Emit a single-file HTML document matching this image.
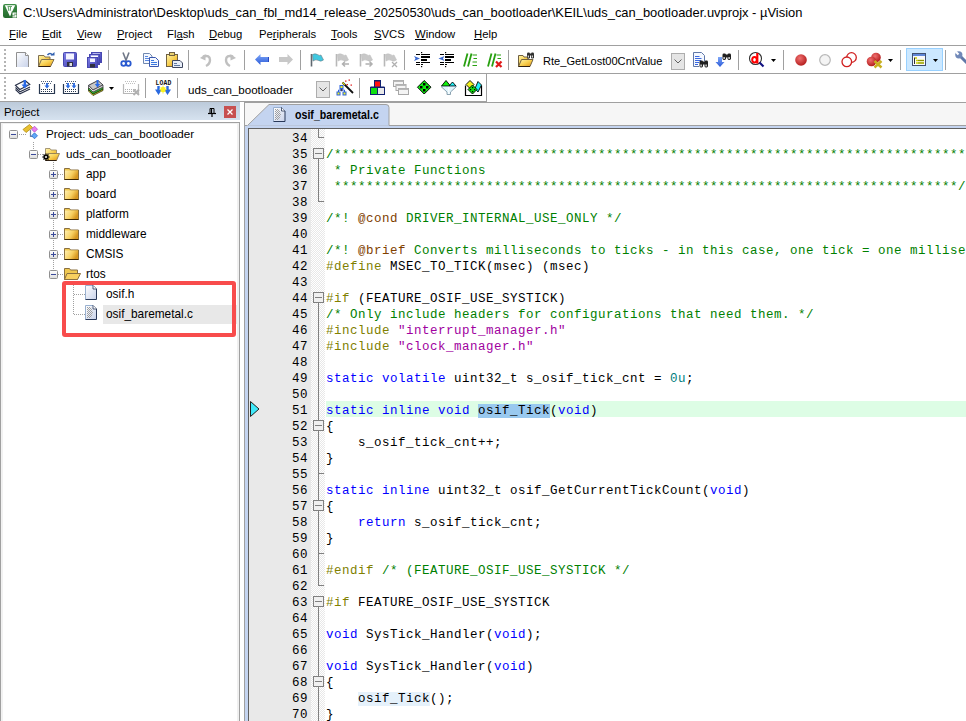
<!DOCTYPE html><html><head><meta charset="utf-8"><title>uVision</title><style>
*{margin:0;padding:0;box-sizing:border-box}
html,body{width:966px;height:721px;overflow:hidden;background:#fff;font-family:"Liberation Sans",sans-serif;color:#000}
.a{position:absolute}
svg{position:absolute;overflow:visible}
.t{position:absolute;white-space:pre;line-height:1}
.sep{position:absolute;width:1px;background:#a0a0a0}
.code{position:absolute;left:326px;white-space:pre;font-family:"Liberation Mono",monospace;font-size:12.5px;letter-spacing:0.5px;line-height:16px;height:16px;padding-top:2px}
.ln{position:absolute;left:249px;width:59px;text-align:right;white-space:pre;font-family:"Liberation Mono",monospace;font-size:12.5px;letter-spacing:0.5px;line-height:16px;height:16px;padding-top:2px;color:#000}
.k{color:#0000ff}.c{color:#008000}.p{color:#808000}.s{color:#a000a0}.n{color:#008080}.d{color:#804000}
.mi{position:absolute;top:25.5px;font-size:11.3px;line-height:16px;white-space:pre}
.mi u{text-decoration:underline;text-underline-offset:1px}
</style></head><body>
<div class="a" style="left:0;top:0;width:966px;height:24px;background:#fff"></div>
<svg style="left:3px;top:4px" width="14" height="14" viewBox="0 0 14 14">
<defs><linearGradient id="kg" x1="0" y1="0" x2="0" y2="1"><stop offset="0" stop-color="#3f8f48"/><stop offset="1" stop-color="#246a2c"/></linearGradient></defs>
<rect x="0" y="0" width="14" height="14" rx="2.2" fill="url(#kg)"/>
<path d="M1.8 1.3 L12.2 1.3 L7 12.5 Z" fill="#fff"/>
<path d="M5.2 2.5 L5.8 6.8 M7.5 2.5 L7.3 6.8 M4.5 2.5H9" stroke="#6aa870" stroke-width="1.1" fill="none"/>
<rect x="8.6" y="7.6" width="5.4" height="6.4" fill="#2a722f"/>
<path d="M9.5 8.5H13.5V9.8H10.8V10.4H13.5V13.6H9.5V12.3H12.2V11.6H9.5Z" fill="#fff"/>
</svg>
<div class="t" style="left:23px;top:6.5px;font-size:12.93px;color:#000">C:\Users\Administrator\Desktop\uds_can_fbl_md14_release_20250530\uds_can_bootloader\KEIL\uds_can_bootloader.uvprojx - µVision</div>
<div class="mi" style="left:9px"><u>F</u>ile</div>
<div class="mi" style="left:42px"><u>E</u>dit</div>
<div class="mi" style="left:77px"><u>V</u>iew</div>
<div class="mi" style="left:117px"><u>P</u>roject</div>
<div class="mi" style="left:167px">Fl<u>a</u>sh</div>
<div class="mi" style="left:209px"><u>D</u>ebug</div>
<div class="mi" style="left:259px">Pe<u>r</u>ipherals</div>
<div class="mi" style="left:331px"><u>T</u>ools</div>
<div class="mi" style="left:374px"><u>S</u>VCS</div>
<div class="mi" style="left:415px"><u>W</u>indow</div>
<div class="mi" style="left:474px"><u>H</u>elp</div>
<div class="a" style="left:0;top:45px;width:966px;height:1px;background:#a0a0a0"></div>
<div class="a" style="left:0;top:46px;width:966px;height:27px;background:#fff"></div>
<div class="a" style="left:0;top:73px;width:966px;height:1px;background:#a0a0a0"></div>
<div class="a" style="left:0;top:74px;width:966px;height:27px;background:#fff"></div>
<div class="a" style="left:486px;top:74px;width:1px;height:27px;background:#a0a0a0"></div>
<div class="a" style="left:0;top:101px;width:487px;height:1px;background:#a0a0a0"></div>
<div class="a" style="left:244px;top:102px;width:722px;height:1px;background:#a0a0a0"></div>
<div class="a" style="left:4px;top:49px;width:2px;height:2px;background:#b4b4b4"></div>
<div class="a" style="left:4px;top:53px;width:2px;height:2px;background:#b4b4b4"></div>
<div class="a" style="left:4px;top:57px;width:2px;height:2px;background:#b4b4b4"></div>
<div class="a" style="left:4px;top:61px;width:2px;height:2px;background:#b4b4b4"></div>
<div class="a" style="left:4px;top:65px;width:2px;height:2px;background:#b4b4b4"></div>
<div class="a" style="left:4px;top:69px;width:2px;height:2px;background:#b4b4b4"></div>
<div class="a" style="left:4px;top:77px;width:2px;height:2px;background:#b4b4b4"></div>
<div class="a" style="left:4px;top:81px;width:2px;height:2px;background:#b4b4b4"></div>
<div class="a" style="left:4px;top:85px;width:2px;height:2px;background:#b4b4b4"></div>
<div class="a" style="left:4px;top:89px;width:2px;height:2px;background:#b4b4b4"></div>
<div class="a" style="left:4px;top:93px;width:2px;height:2px;background:#b4b4b4"></div>
<div class="a" style="left:4px;top:97px;width:2px;height:2px;background:#b4b4b4"></div>
<div class="sep" style="left:108px;top:50px;height:20px"></div>
<div class="sep" style="left:188px;top:50px;height:20px"></div>
<div class="sep" style="left:244px;top:50px;height:20px"></div>
<div class="sep" style="left:300px;top:50px;height:20px"></div>
<div class="sep" style="left:404px;top:50px;height:20px"></div>
<div class="sep" style="left:508px;top:50px;height:20px"></div>
<div class="sep" style="left:738px;top:50px;height:20px"></div>
<div class="sep" style="left:783px;top:50px;height:20px"></div>
<div class="sep" style="left:900px;top:50px;height:20px"></div>
<div class="sep" style="left:945px;top:50px;height:20px"></div>
<div class="sep" style="left:145px;top:78px;height:20px"></div>
<div class="sep" style="left:177px;top:78px;height:20px"></div>
<div class="sep" style="left:359px;top:78px;height:20px"></div>
<svg style="left:0;top:0" width="0" height="0"><defs><linearGradient id="gd" x1="0" y1="0" x2="1" y2="1"><stop offset="0" stop-color="#ffffff"/><stop offset="1" stop-color="#c8d2ea"/></linearGradient><linearGradient id="gy" x1="0" y1="0" x2="1" y2="1"><stop offset="0" stop-color="#fff4b0"/><stop offset="0.5" stop-color="#f8d050"/><stop offset="1" stop-color="#e09010"/></linearGradient><linearGradient id="gp" x1="0" y1="0" x2="1" y2="1"><stop offset="0" stop-color="#8080e8"/><stop offset="1" stop-color="#4040b0"/></linearGradient><radialGradient id="rg" cx="0.4" cy="0.35" r="0.7"><stop offset="0" stop-color="#f07070"/><stop offset="1" stop-color="#b01818"/></radialGradient><linearGradient id="gb" x1="0" y1="0" x2="0" y2="1"><stop offset="0" stop-color="#80a8f8"/><stop offset="1" stop-color="#2a5ad8"/></linearGradient><linearGradient id="gx" x1="0" y1="0" x2="0" y2="1"><stop offset="0" stop-color="#ffffff"/><stop offset="1" stop-color="#dcdcdc"/></linearGradient><pattern id="chk" width="2" height="2" patternUnits="userSpaceOnUse"><rect width="1" height="1" fill="#a0a0a0"/><rect x="1" y="1" width="1" height="1" fill="#a0a0a0"/></pattern></defs></svg>
<svg style="left:16px;top:52px" width="13" height="15" viewBox="0 0 13 15"><path d="M0.5 15V0.5H9.5L12.5 3.5V15" fill="url(#gd)" stroke="#909090"/><path d="M9.5 0.5V3.5H12.5" fill="#fff" stroke="#909090"/></svg>
<svg style="left:38px;top:52px" width="17" height="15" viewBox="0 0 17 15"><path d="M0.5 14.5V3.5H6L7 5H12V7" fill="url(#gy)" stroke="#807050"/><path d="M3.5 7.5H16L12.5 14.5H0.5Z" fill="url(#gy)" stroke="#807050"/><path d="M0.5 14.5H12.5" stroke="#302010"/><path d="M9.5 3 Q12 0 14.5 3" stroke="#3060b0" stroke-width="1.6" fill="none"/><path d="M12.5 3.5H16.5V0Z" fill="#3060b0"/></svg>
<svg style="left:63px;top:52px" width="14" height="15" viewBox="0 0 14 15"><rect x="0.5" y="0.5" width="13" height="14" rx="1" fill="url(#gp)" stroke="#4848b0"/><rect x="3" y="1.5" width="8" height="6" fill="#f4f4ff"/><rect x="4" y="10" width="6" height="4.5" fill="#303040"/><rect x="6.5" y="11" width="2.5" height="3" fill="#e0e0e0"/></svg>
<svg style="left:87px;top:52px" width="15" height="16" viewBox="0 0 15 16"><rect x="4.5" y="0.5" width="10" height="10" fill="url(#gp)" stroke="#4848b0"/><rect x="6" y="1.5" width="7" height="1.5" fill="#fff"/><rect x="2.5" y="2.5" width="10" height="10" fill="url(#gp)" stroke="#4848b0"/><rect x="4" y="3.5" width="7" height="1.5" fill="#fff"/><rect x="0.5" y="5.5" width="10" height="10" fill="url(#gp)" stroke="#4848b0"/><rect x="3" y="6.5" width="5" height="3.5" fill="#f4f4ff"/><rect x="3" y="12" width="5" height="3.5" fill="#303040"/></svg>
<svg style="left:121px;top:52px" width="10" height="15" viewBox="0 0 10 15"><path d="M2 0.5L5.3 9M8 0.5L4.7 9" stroke="#707888" stroke-width="1.6"/><circle cx="2.6" cy="11.5" r="2.3" fill="none" stroke="#2a5ad0" stroke-width="1.8"/><circle cx="7.4" cy="11.5" r="2.3" fill="none" stroke="#2a5ad0" stroke-width="1.8"/></svg>
<svg style="left:143px;top:53px" width="16" height="14" viewBox="0 0 16 14"><path d="M0.5 0.5H6.5L9 3V10.5H0.5Z" fill="#f4f8ff" stroke="#7088b0"/><path d="M2 3.5H5M2 5.5H7M2 7.5H7" stroke="#5a88e0"/><path d="M6.5 4.5H12.5L15.5 7.5V13.5H6.5Z" fill="#f4f8ff" stroke="#3a58b0"/><path d="M8 7.5H11M8 9.5H14M8 11.5H14" stroke="#3a78e0"/></svg>
<svg style="left:166px;top:52px" width="17" height="16" viewBox="0 0 17 16"><rect x="0.5" y="2.5" width="11" height="12" fill="url(#gy)" stroke="#706040"/><rect x="3.5" y="0.5" width="5" height="3" fill="#e8d070" stroke="#706040"/><path d="M6.5 8.5H14L16.5 11V15.5H6.5Z" fill="#e8eef8" stroke="#404860"/><path d="M8 11.5H11M8 13.5H14" stroke="#6078a0"/></svg>
<svg style="left:200px;top:53px" width="12" height="14" viewBox="0 0 12 14"><path d="M3 3.5 Q10 1.5 10 7 Q10 11 6 13" stroke="#c0c0c0" stroke-width="2.4" fill="none"/><path d="M0 5L5.5 1V7.5Z" fill="#c0c0c0"/></svg>
<svg style="left:224px;top:53px" width="12" height="14" viewBox="0 0 12 14"><path d="M9 3.5 Q2 1.5 2 7 Q2 11 6 13" stroke="#c0c0c0" stroke-width="2.4" fill="none"/><path d="M12 5L6.5 1V7.5Z" fill="#c0c0c0"/></svg>
<svg style="left:255px;top:54px" width="14" height="11" viewBox="0 0 14 11"><path d="M0 5.5L5.5 0V3H14V8H5.5V11Z" fill="url(#gb)"/><path d="M13 3H14V8H13Z" fill="#2a4ac0"/></svg>
<svg style="left:279px;top:54px" width="14" height="11" viewBox="0 0 14 11"><path d="M14 5.5L8.5 0V3H0V8H8.5V11Z" fill="#c8c8c8"/></svg>
<svg style="left:310px;top:53px" width="15" height="14" viewBox="0 0 15 14"><path d="M1.5 1V13.5" stroke="#606870" stroke-width="1.6"/><path d="M2.5 1.5 Q5 0 7.5 1.5 Q9.5 3 11 2 L13.5 7 Q11 9 8.5 7.5 Q6 6 3 8Z" fill="#40c8e0" stroke="#606870" stroke-width="0.5"/></svg>
<svg style="left:335px;top:53px" width="15" height="14" viewBox="0 0 15 14"><path d="M1.5 1V13.5" stroke="#b8b8b8" stroke-width="1.6"/><path d="M2.5 1.5 Q5 0 7.5 1.5 Q9.5 3 11 2 L13.5 7 Q11 9 8.5 7.5 Q6 6 3 8Z" fill="#c8c8c8" stroke="#b8b8b8" stroke-width="0.5"/><path d="M14 11H7.5M10 8.5L7.5 11L10 13.5" stroke="#b0b0b0" stroke-width="1.5" fill="none"/></svg>
<svg style="left:359px;top:53px" width="15" height="14" viewBox="0 0 15 14"><path d="M1.5 1V13.5" stroke="#b8b8b8" stroke-width="1.6"/><path d="M2.5 1.5 Q5 0 7.5 1.5 Q9.5 3 11 2 L13.5 7 Q11 9 8.5 7.5 Q6 6 3 8Z" fill="#c8c8c8" stroke="#b8b8b8" stroke-width="0.5"/><path d="M6.5 11H13M10.5 8.5L13 11L10.5 13.5" stroke="#b0b0b0" stroke-width="1.5" fill="none"/></svg>
<svg style="left:383px;top:53px" width="15" height="14" viewBox="0 0 15 14"><path d="M1.5 1V13.5" stroke="#b8b8b8" stroke-width="1.6"/><path d="M2.5 1.5 Q5 0 7.5 1.5 Q9.5 3 11 2 L13.5 7 Q11 9 8.5 7.5 Q6 6 3 8Z" fill="#c8c8c8" stroke="#b8b8b8" stroke-width="0.5"/><path d="M9 9L14 14M14 9L9 14" stroke="#b0b0b0" stroke-width="1.3"/></svg>
<svg style="left:414px;top:52px" width="17" height="16" viewBox="0 0 17 16"><rect x="7" y="0" width="1.2" height="1.2" fill="#000"/><rect x="7" y="14" width="1.2" height="1.2" fill="#000"/><path d="M7 2.5H16M7 10.5H16" stroke="#000" stroke-width="1"/><path d="M7 5H16M7 8H13" stroke="#000" stroke-width="1.8"/><path d="M7 12.5H9" stroke="#000" stroke-width="1"/><path d="M2 2.5H6M2 10.5H6M2 12.5H6" stroke="#000" stroke-width="1"/><path d="M0 4L6 6.5L0 9L1.5 6.5Z" fill="#3a68d0"/></svg>
<svg style="left:438px;top:52px" width="17" height="16" viewBox="0 0 17 16"><rect x="7" y="0" width="1.2" height="1.2" fill="#000"/><rect x="7" y="14" width="1.2" height="1.2" fill="#000"/><path d="M7 2.5H16M7 10.5H16" stroke="#000" stroke-width="1"/><path d="M7 5H16M7 8H13" stroke="#000" stroke-width="1.8"/><path d="M7 12.5H9" stroke="#000" stroke-width="1"/><path d="M2 2.5H6M2 10.5H6M2 12.5H6" stroke="#000" stroke-width="1"/><path d="M6.5 4L0.5 6.5L6.5 9L5 6.5Z" fill="#3a68d0"/></svg>
<svg style="left:463px;top:53px" width="15" height="14" viewBox="0 0 15 14"><path d="M4.5 0.5L1 13.5M8.5 0.5L5 13.5" stroke="#28a010" stroke-width="1.8"/><path d="M9.5 2H14M10.5 5.5H14M9.5 9H14M9.5 12.5H14" stroke="#28a010" stroke-width="1.1"/></svg>
<svg style="left:487px;top:53px" width="16" height="15" viewBox="0 0 16 15"><path d="M4.5 0.5L1 13.5M8.5 0.5L5 13.5" stroke="#28a010" stroke-width="1.8"/><path d="M9.5 2H14M10.5 5.5H14" stroke="#28a010" stroke-width="1.1"/><path d="M9 8.5L14.5 14M14.5 8.5L9 14" stroke="#e01818" stroke-width="2.2"/></svg>
<svg style="left:518px;top:52px" width="17" height="15" viewBox="0 0 17 15"><path d="M0.5 14.5V3.5H5L6 5H10V8" fill="url(#gy)" stroke="#706040"/><path d="M3.5 7.5H15L12 14.5H0.5Z" fill="url(#gy)" stroke="#706040"/><path d="M0.5 14.5H12" stroke="#302010"/><rect x="9" y="0.5" width="3" height="6" rx="1.2" fill="#303030"/><rect x="13" y="0.5" width="3" height="6" rx="1.2" fill="#303030"/><rect x="11.5" y="1.5" width="2" height="2" fill="#303030"/><rect x="9.8" y="3.5" width="1" height="2" fill="#fff"/><rect x="13.8" y="3.5" width="1" height="2" fill="#fff"/></svg>
<div class="t" style="left:543px;top:56px;font-size:11.1px">Rte_GetLost00CntValue</div>
<div class="a" style="left:671px;top:53px;width:14px;height:17px;background:#e5e5e5;border:1px solid #adadad"></div>
<svg style="left:674px;top:59px" width="8" height="5" viewBox="0 0 8 5"><path d="M0.5 0.5L4 4L7.5 0.5" stroke="#606060" fill="none"/></svg>
<svg style="left:693px;top:52px" width="16" height="16" viewBox="0 0 16 16"><path d="M0.5 14.5V0.5H8.5L11.5 3.5V9" fill="#f4f8ff" stroke="#6078a8"/><path d="M0.5 14.5H6" stroke="#6078a8"/><path d="M2 4.5H6.5M2 6.5H8.5M2 8.5H8M2 10.5H6M2 12.5H5" stroke="#3a68e0"/><rect x="6.5" y="8.5" width="3.5" height="7" rx="1.4" fill="#202020"/><rect x="11.5" y="8.5" width="3.5" height="7" rx="1.4" fill="#202020"/><rect x="9" y="9.5" width="3.5" height="3" fill="#202020"/><rect x="7.5" y="12.5" width="1.2" height="2" fill="#fff"/><rect x="12.5" y="12.5" width="1.2" height="2" fill="#fff"/></svg>
<svg style="left:716px;top:52px" width="16" height="16" viewBox="0 0 16 16"><path d="M2 5H6V10H8.5L4 15L-0.5 10H2Z" fill="url(#gb)"/><rect x="6.5" y="1.5" width="3.5" height="6.5" rx="1.4" fill="#202020"/><rect x="11.5" y="1.5" width="3.5" height="6.5" rx="1.4" fill="#202020"/><rect x="9" y="2.5" width="3.5" height="3" fill="#202020"/><rect x="7.5" y="5" width="1.2" height="2" fill="#fff"/><rect x="12.5" y="5" width="1.2" height="2" fill="#fff"/></svg>
<svg style="left:749px;top:52px" width="16" height="16" viewBox="0 0 16 16"><circle cx="6.5" cy="6.5" r="6" fill="#fff" stroke="#303030" stroke-width="1.1"/><path d="M10.5 10.5L14.5 14.5" stroke="#101080" stroke-width="2.2"/><path d="M8.3 1V11.5" stroke="#ff0000" stroke-width="2.2"/><ellipse cx="5.5" cy="7.8" rx="2.3" ry="2.8" fill="none" stroke="#ff0000" stroke-width="2"/></svg>
<svg style="left:771px;top:59px" width="6" height="4" viewBox="0 0 6 4"><path d="M0 0H5L2.5 3Z" fill="#000"/></svg>
<svg style="left:795px;top:54px" width="13" height="13" viewBox="0 0 13 13"><circle cx="6" cy="6" r="5.8" fill="url(#rg)"/></svg>
<svg style="left:819px;top:54px" width="13" height="13" viewBox="0 0 13 13"><circle cx="6" cy="6" r="5.3" fill="#f4f4f4" stroke="#b8b8b8" stroke-width="1.2"/></svg>
<svg style="left:841px;top:52px" width="17" height="16" viewBox="0 0 17 16"><circle cx="10.5" cy="5.5" r="4.8" fill="#fff" stroke="#d02020" stroke-width="1.3"/><circle cx="5.8" cy="9.8" r="4.8" fill="#fff" stroke="#d02020" stroke-width="1.3"/></svg>
<svg style="left:866px;top:52px" width="17" height="16" viewBox="0 0 17 16"><circle cx="10" cy="5.5" r="4.8" fill="url(#rg)"/><circle cx="5.5" cy="9.5" r="4.8" fill="url(#rg)"/><path d="M8.5 9L15.5 15.5M15.5 9L8.5 15.5" stroke="#c8b020" stroke-width="2.4"/></svg>
<svg style="left:888px;top:59px" width="6" height="4" viewBox="0 0 6 4"><path d="M0 0H5L2.5 3Z" fill="#000"/></svg>
<div class="a" style="left:906px;top:48px;width:37px;height:23px;background:#cce8ff;border:1px solid #99d1ff"></div>
<svg style="left:912px;top:53px" width="14" height="13" viewBox="0 0 14 13"><rect x="0.5" y="0.5" width="13" height="12" fill="#fafafa" stroke="#405070"/><rect x="1" y="1" width="12" height="2" fill="#6088d8"/><path d="M2.5 4.5V11" stroke="#303030" stroke-width="1"/><path d="M3 5H5M4 7.5H12M4 10H12" stroke="#c8d000" stroke-width="1.6"/><path d="M6 7.5H12M6 10H12" stroke="#505000" stroke-width="0.5"/></svg>
<svg style="left:933px;top:59px" width="6" height="4" viewBox="0 0 6 4"><path d="M0 0H5L2.5 3Z" fill="#000"/></svg>
<svg style="left:955px;top:51px" width="13" height="14" viewBox="0 0 13 14"><path d="M4 4L12 12" stroke="#6078a8" stroke-width="3"/><circle cx="3.8" cy="3.8" r="3.6" fill="#7088b8"/><path d="M3.5 3.5L1 1" stroke="#fff" stroke-width="2.2"/></svg>
<svg style="left:15px;top:80px" width="16" height="16" viewBox="0 0 16 16"><path d="M0.5 9.5L5 13.8L15 9" fill="none" stroke="#283048" stroke-width="1.1"/><path d="M0.5 7.5L5 11.8L15 7" fill="none" stroke="#283048" stroke-width="1.1"/><path d="M0.5 5.3L10 0.5L14.8 4.5L4.8 9.5Z" fill="#fff" stroke="#283048" stroke-width="1.1"/><path d="M9.8 0V5" stroke="#2a6ae8" stroke-width="2.4"/><path d="M6.5 4.5H13L9.8 8.5Z" fill="#2a6ae8"/></svg>
<svg style="left:39px;top:80px" width="16" height="15" viewBox="0 0 16 15"><path d="M0.5 4V13.5H15.5V4" fill="none" stroke="#283850" stroke-width="1.2"/><path d="M2 1.5H14M3 3.5H13" stroke="#506078" stroke-width="1" stroke-dasharray="1 1"/><path d="M2 9.5H14M2 11.5H14" stroke="#283850" stroke-width="1" stroke-dasharray="1 1"/><path d="M8 3V6" stroke="#2a6ae0" stroke-width="1.8"/><path d="M5.5 5.5H10.5L8 8.5Z" fill="#2a6ae0"/></svg>
<svg style="left:63px;top:80px" width="16" height="15" viewBox="0 0 16 15"><path d="M0.5 4V13.5H15.5V4" fill="none" stroke="#283850" stroke-width="1.2"/><path d="M2 1.5H14M3 3.5H13" stroke="#506078" stroke-width="1" stroke-dasharray="1 1"/><path d="M2 9.5H14M2 11.5H14" stroke="#283850" stroke-width="1" stroke-dasharray="1 1"/><path d="M5 3V6" stroke="#2a6ae0" stroke-width="1.8"/><path d="M2.5 5.5H7.5L5 8.5Z" fill="#2a6ae0"/><path d="M11 3V6" stroke="#2a6ae0" stroke-width="1.8"/><path d="M8.5 5.5H13.5L11 8.5Z" fill="#2a6ae0"/></svg>
<svg style="left:88px;top:80px" width="16" height="16" viewBox="0 0 16 16"><path d="M0.5 9.5L5 14L15 9L15 10.5L5 15.5L0.5 11Z" fill="#e0e020" stroke="#303010" stroke-width="0.8"/><path d="M0.5 7.5L5 12L15 7L15 9L5 14L0.5 9.5Z" fill="#30c030" stroke="#203010" stroke-width="0.8"/><path d="M0.5 5.3L10 0.5L15 5L5 10Z" fill="#c8c8c8" stroke="#404048" stroke-width="1"/><path d="M0.5 5.3L5 10L15 5L15 7L5 12L0.5 7.5Z" fill="#e8e8e8" stroke="#404048" stroke-width="0.8"/><path d="M9.5 0V4.5" stroke="#2a6ae8" stroke-width="2"/><path d="M6.8 4H12.2L9.5 7.5Z" fill="#2a6ae8"/></svg>
<svg style="left:109px;top:87px" width="6" height="4" viewBox="0 0 6 4"><path d="M0 0H5L2.5 3Z" fill="#000"/></svg>
<svg style="left:123px;top:80px" width="17" height="16" viewBox="0 0 17 16"><path d="M0.5 4V13.5H15.5V4" fill="none" stroke="#b8b8b8" stroke-width="1.2"/><path d="M2 1.5H14M3 3.5H13" stroke="#c0c0c0" stroke-width="1" stroke-dasharray="1 1"/><path d="M2 9.5H14M2 11.5H14" stroke="#b0b0b0" stroke-width="1" stroke-dasharray="1 1"/><path d="M10.5 9.5L16 15M16 9.5L10.5 15" stroke="#b0b0b0" stroke-width="1.8"/></svg>
<svg style="left:155px;top:79px" width="17" height="17" viewBox="0 0 17 17"><text x="8.5" y="5.6" font-family="Liberation Mono" font-size="6.4" font-weight="bold" text-anchor="middle" fill="#101010" letter-spacing="0.2">LOAD</text><path d="M3.5 7V12M12.5 7V12" stroke="#2a6ae0" stroke-width="2.4"/><path d="M0 10.5H7L3.5 16Z M9 10.5H16L12.5 16Z" fill="#2a6ae0"/><circle cx="8" cy="10.5" r="2.6" fill="#f8f020"/><path d="M8 6.5V14.5M4.5 10.5H11.5M5.5 8L10.5 13M10.5 8L5.5 13" stroke="#f8f020" stroke-width="0.9"/></svg>
<div class="t" style="left:188px;top:84px;font-size:11.6px">uds_can_bootloader</div>
<div class="a" style="left:316px;top:81px;width:14px;height:17px;background:#e5e5e5;border:1px solid #adadad"></div>
<svg style="left:319px;top:87px" width="8" height="5" viewBox="0 0 8 5"><path d="M0.5 0.5L4 4L7.5 0.5" stroke="#606060" fill="none"/></svg>
<svg style="left:336px;top:79px" width="18" height="17" viewBox="0 0 18 17"><path d="M5.5 8V11M2.5 11V14M8.5 11V14M2.5 11H8.5" stroke="#2a60e0" stroke-width="1" fill="none"/><path d="M5.5 9.5L7 11L5.5 12.5L4 11Z" fill="#303860"/><rect x="4" y="6.5" width="3" height="3" fill="#f0f020" stroke="#2a60e0"/><rect x="1" y="13" width="3" height="3" fill="#f0f020" stroke="#2a60e0"/><rect x="7" y="13" width="3" height="3" fill="#f0f020" stroke="#2a60e0"/><path d="M6.5 3.5L17 14" stroke="#101010" stroke-width="1.8"/><path d="M6.5 3.5L8.8 5.8" stroke="#e8e020" stroke-width="1.2"/><rect x="9" y="1.5" width="1.5" height="1.2" fill="#e02020"/><rect x="12.5" y="0.5" width="1.5" height="1.2" fill="#e02020"/><rect x="10.5" y="5" width="1.5" height="1.2" fill="#e02020"/><rect x="14.5" y="5.5" width="1.5" height="1.2" fill="#e02020"/></svg>
<svg style="left:370px;top:80px" width="15" height="15" viewBox="0 0 15 15"><rect x="4.5" y="0.5" width="6" height="7" fill="#ff1010" stroke="#102070"/><rect x="4.5" y="0" width="6" height="1.5" fill="#102070"/><rect x="0.5" y="7.5" width="7" height="7" fill="#10e010" stroke="#102070"/><rect x="7.5" y="7.5" width="7" height="7" fill="#e8e8e8" stroke="#102070"/><rect x="0.5" y="6.5" width="14" height="1.5" fill="#102070"/></svg>
<svg style="left:393px;top:80px" width="16" height="16" viewBox="0 0 16 16"><rect x="0.5" y="0.5" width="10" height="6" fill="#f4f4f4" stroke="#a8a8a8"/><rect x="0.5" y="0.5" width="10" height="1.5" fill="#b8b8b8"/><rect x="3" y="4.5" width="10" height="6" fill="#f4f4f4" stroke="#a8a8a8"/><rect x="3" y="4.5" width="10" height="1.5" fill="#b8b8b8"/><rect x="5.5" y="8.5" width="10" height="6" fill="#f4f4f4" stroke="#a8a8a8"/><rect x="5.5" y="8.5" width="10" height="1.5" fill="#b8b8b8"/></svg>
<svg style="left:417px;top:80px" width="15" height="15" viewBox="0 0 15 15"><path d="M7.2 0.5L14 7.2L7.2 14L0.5 7.2Z" fill="#10f010" stroke="#000" stroke-width="1"/><rect x="6" y="3" width="2.5" height="2.5" fill="#000"/><rect x="3" y="6" width="2.5" height="2.5" fill="#000"/><rect x="9" y="6" width="2.5" height="2.5" fill="#000"/><rect x="6" y="9" width="2.5" height="2.5" fill="#000"/></svg>
<svg style="left:441px;top:80px" width="16" height="15" viewBox="0 0 16 15"><path d="M0.5 6L5 0.5L9.5 6Z" fill="#10f010" stroke="#000" stroke-width="0.9"/><path d="M8 6L11.5 2L15 6Z" fill="#20f0f8" stroke="#000" stroke-width="0.9"/><path d="M0 6.5H15.5L9.5 12V14.5H6V12Z" fill="#e0f4fc" stroke="#8098a8" stroke-width="0.9"/><path d="M7.8 7V14" stroke="#fff" stroke-width="1"/></svg>
<svg style="left:465px;top:80px" width="17" height="16" viewBox="0 0 17 16"><path d="M0.5 5.5V15.5H16.5V5.5" fill="#fff" stroke="#000" stroke-width="1.2"/><path d="M5 0.5L9 4.5L5 8.5L1 4.5Z" fill="#f0f020" stroke="#000" stroke-width="0.9"/><path d="M13 1.5L16.5 5L13 12L10 8.5Z" fill="#20f0f8" stroke="#000" stroke-width="0.9"/><path d="M7.5 5L12 9.5L7.5 14L3 9.5Z" fill="#10e010" stroke="#000" stroke-width="0.9"/><rect x="7" y="7" width="1.2" height="1.2" fill="#000"/><rect x="5" y="9" width="1.2" height="1.2" fill="#000"/><rect x="9" y="9" width="1.2" height="1.2" fill="#000"/><rect x="7" y="11" width="1.2" height="1.2" fill="#000"/></svg>
<div class="a" style="left:0;top:102px;width:240px;height:18px;background:linear-gradient(#bccada,#d6e2ef)"></div>
<div class="t" style="left:4px;top:106.5px;font-size:11.4px;color:#000">Project</div>
<svg style="left:208px;top:108px" width="8" height="9" viewBox="0 0 8 9"><path d="M2 0.5H6V5.5H2Z" fill="none" stroke="#000" stroke-width="1"/><path d="M3.5 1V5" stroke="#000" stroke-width="1.2"/><path d="M0 5.5H8" stroke="#000" stroke-width="1.2"/><path d="M4 6V9" stroke="#000" stroke-width="1.2"/></svg>
<div class="a" style="left:224px;top:106px;width:12px;height:12px;background:#c75050"></div>
<svg style="left:227px;top:109px" width="6" height="6" viewBox="0 0 6 6"><path d="M0.5 0.5L5.5 5.5M5.5 0.5L0.5 5.5" stroke="#fff" stroke-width="1.3"/></svg>
<div class="a" style="left:0;top:122px;width:240px;height:600px;border-top:1px solid #a0a0a0;border-right:1px solid #a0a0a0;border-left:1px solid #a0a0a0;background:#fff"></div>
<div class="a" style="left:237px;top:123px;width:2px;height:600px;background:#f0f0f0"></div>
<div class="a" style="left:1px;top:123px;width:2px;height:600px;background:#f2f2f2"></div>
<div class="a" style="left:1px;top:123px;width:237px;height:1px;background:#f0f0f0"></div>
<div class="a" style="left:244px;top:102px;width:1px;height:620px;background:#a0a0a0"></div>
<svg style="left:0;top:0" width="0" height="0"><defs><linearGradient id="fg" x1="0" y1="0" x2="1" y2="0.4"><stop offset="0" stop-color="#fff0b0"/><stop offset="0.6" stop-color="#f8d060"/><stop offset="1" stop-color="#d89820"/></linearGradient></defs></svg>
<svg style="left:9px;top:130px" width="9" height="9" viewBox="0 0 9 9"><rect x="0.5" y="0.5" width="8" height="8" rx="1" fill="url(#gx)" stroke="#909090"/><path d="M2 4.5H7" stroke="#3a4a9a"/></svg>
<div class="a" style="left:19px;top:134px;width:8px;height:1px;background:repeating-linear-gradient(90deg,#a0a0a0 0 1px,transparent 1px 2px)"></div>
<svg style="left:22px;top:123px" width="16" height="16" viewBox="0 0 16 16"><path d="M1 6.5L7.5 1.5L10.5 4.5L4 9.5Z" fill="#e8c030" stroke="#b08a10" stroke-width="0.8"/><path d="M8.5 7V13.5H11" stroke="#6a80a8" stroke-width="1.2" fill="none"/><path d="M12.5 3.2L15.5 6.2L12.5 9.2L9.5 6.2Z" fill="#e880f0" stroke="#b040c0" stroke-width="0.7"/><path d="M12.5 9.8L15.5 12.8L12.5 15.8L9.5 12.8Z" fill="#60a8f8" stroke="#2060c0" stroke-width="0.7"/></svg>
<div class="t" style="left:46px;top:128px;font-size:11.65px">Project: uds_can_bootloader</div>
<div class="a" style="left:33px;top:142px;width:1px;height:8px;background:repeating-linear-gradient(180deg,#a0a0a0 0 1px,transparent 1px 2px)"></div>
<svg style="left:29px;top:150px" width="9" height="9" viewBox="0 0 9 9"><rect x="0.5" y="0.5" width="8" height="8" rx="1" fill="url(#gx)" stroke="#909090"/><path d="M2 4.5H7" stroke="#3a4a9a"/></svg>
<div class="a" style="left:38px;top:154px;width:5px;height:1px;background:repeating-linear-gradient(90deg,#a0a0a0 0 1px,transparent 1px 2px)"></div>
<svg style="left:43px;top:147px" width="17" height="14" viewBox="0 0 17 14"><path d="M2.5 12.5V1.5H7L8 3H13.5V6" fill="url(#gy)" stroke="#908060" stroke-width="0.8"/><path d="M4.5 6.5H16.5L13.5 13.5H2.5Z" fill="url(#gy)" stroke="#807050" stroke-width="0.8"/><path d="M2.5 13.5H13.5" stroke="#302010"/><g stroke="#000" stroke-width="1.3"><path d="M0.5 7.5L5.5 12.5M5.5 7.5L0.5 12.5M3 6.5V13.5M-0.5 10H6.5"/></g><circle cx="3" cy="10" r="1" fill="#fff"/></svg>
<div class="t" style="left:66px;top:148px;font-size:11.65px">uds_can_bootloader</div>
<div class="a" style="left:53px;top:162px;width:1px;height:112px;background:repeating-linear-gradient(180deg,#a0a0a0 0 1px,transparent 1px 2px)"></div>
<svg style="left:49px;top:170px" width="9" height="9" viewBox="0 0 9 9"><rect x="0.5" y="0.5" width="8" height="8" rx="1" fill="url(#gx)" stroke="#909090"/><path d="M2 4.5H7" stroke="#3a4a9a"/><path d="M4.5 2V7" stroke="#3a4a9a"/></svg>
<div class="a" style="left:58px;top:174px;width:6px;height:1px;background:repeating-linear-gradient(90deg,#a0a0a0 0 1px,transparent 1px 2px)"></div>
<svg style="left:64px;top:167px" width="15" height="13" viewBox="0 0 15 13"><path d="M0.5 1.5H5.5L6.5 3H14.5V12.5H0.5Z" fill="#f0c850" stroke="#8a7040"/><rect x="1" y="3.5" width="13" height="8.5" fill="url(#fg)"/><path d="M0.5 12.5H14.5" stroke="#402800"/></svg>
<div class="t" style="left:86px;top:169px;font-size:11.85px">app</div>
<svg style="left:49px;top:190px" width="9" height="9" viewBox="0 0 9 9"><rect x="0.5" y="0.5" width="8" height="8" rx="1" fill="url(#gx)" stroke="#909090"/><path d="M2 4.5H7" stroke="#3a4a9a"/><path d="M4.5 2V7" stroke="#3a4a9a"/></svg>
<div class="a" style="left:58px;top:194px;width:6px;height:1px;background:repeating-linear-gradient(90deg,#a0a0a0 0 1px,transparent 1px 2px)"></div>
<svg style="left:64px;top:187px" width="15" height="13" viewBox="0 0 15 13"><path d="M0.5 1.5H5.5L6.5 3H14.5V12.5H0.5Z" fill="#f0c850" stroke="#8a7040"/><rect x="1" y="3.5" width="13" height="8.5" fill="url(#fg)"/><path d="M0.5 12.5H14.5" stroke="#402800"/></svg>
<div class="t" style="left:86px;top:189px;font-size:11.85px">board</div>
<svg style="left:49px;top:210px" width="9" height="9" viewBox="0 0 9 9"><rect x="0.5" y="0.5" width="8" height="8" rx="1" fill="url(#gx)" stroke="#909090"/><path d="M2 4.5H7" stroke="#3a4a9a"/><path d="M4.5 2V7" stroke="#3a4a9a"/></svg>
<div class="a" style="left:58px;top:214px;width:6px;height:1px;background:repeating-linear-gradient(90deg,#a0a0a0 0 1px,transparent 1px 2px)"></div>
<svg style="left:64px;top:207px" width="15" height="13" viewBox="0 0 15 13"><path d="M0.5 1.5H5.5L6.5 3H14.5V12.5H0.5Z" fill="#f0c850" stroke="#8a7040"/><rect x="1" y="3.5" width="13" height="8.5" fill="url(#fg)"/><path d="M0.5 12.5H14.5" stroke="#402800"/></svg>
<div class="t" style="left:86px;top:209px;font-size:11.85px">platform</div>
<svg style="left:49px;top:230px" width="9" height="9" viewBox="0 0 9 9"><rect x="0.5" y="0.5" width="8" height="8" rx="1" fill="url(#gx)" stroke="#909090"/><path d="M2 4.5H7" stroke="#3a4a9a"/><path d="M4.5 2V7" stroke="#3a4a9a"/></svg>
<div class="a" style="left:58px;top:234px;width:6px;height:1px;background:repeating-linear-gradient(90deg,#a0a0a0 0 1px,transparent 1px 2px)"></div>
<svg style="left:64px;top:227px" width="15" height="13" viewBox="0 0 15 13"><path d="M0.5 1.5H5.5L6.5 3H14.5V12.5H0.5Z" fill="#f0c850" stroke="#8a7040"/><rect x="1" y="3.5" width="13" height="8.5" fill="url(#fg)"/><path d="M0.5 12.5H14.5" stroke="#402800"/></svg>
<div class="t" style="left:86px;top:229px;font-size:11.85px">middleware</div>
<svg style="left:49px;top:250px" width="9" height="9" viewBox="0 0 9 9"><rect x="0.5" y="0.5" width="8" height="8" rx="1" fill="url(#gx)" stroke="#909090"/><path d="M2 4.5H7" stroke="#3a4a9a"/><path d="M4.5 2V7" stroke="#3a4a9a"/></svg>
<div class="a" style="left:58px;top:254px;width:6px;height:1px;background:repeating-linear-gradient(90deg,#a0a0a0 0 1px,transparent 1px 2px)"></div>
<svg style="left:64px;top:247px" width="15" height="13" viewBox="0 0 15 13"><path d="M0.5 1.5H5.5L6.5 3H14.5V12.5H0.5Z" fill="#f0c850" stroke="#8a7040"/><rect x="1" y="3.5" width="13" height="8.5" fill="url(#fg)"/><path d="M0.5 12.5H14.5" stroke="#402800"/></svg>
<div class="t" style="left:86px;top:249px;font-size:11.85px">CMSIS</div>
<svg style="left:49px;top:270px" width="9" height="9" viewBox="0 0 9 9"><rect x="0.5" y="0.5" width="8" height="8" rx="1" fill="url(#gx)" stroke="#909090"/><path d="M2 4.5H7" stroke="#3a4a9a"/></svg>
<div class="a" style="left:58px;top:274px;width:6px;height:1px;background:repeating-linear-gradient(90deg,#a0a0a0 0 1px,transparent 1px 2px)"></div>
<svg style="left:64px;top:267px" width="17" height="14" viewBox="0 0 17 14"><path d="M0.5 1.5H5.5L6.5 3H13.5V12.5H0.5Z" fill="#f0c850" stroke="#8a7040"/><path d="M3 6.5H16.5L13.5 12.5H0.5Z" fill="#f8d060" stroke="#8a7040"/></svg>
<div class="t" style="left:86px;top:269px;font-size:11.85px">rtos</div>
<div class="a" style="left:73px;top:283px;width:1px;height:31px;background:repeating-linear-gradient(180deg,#a0a0a0 0 1px,transparent 1px 2px)"></div>
<div class="a" style="left:103px;top:305px;width:134px;height:19px;background:#e8e8e8"></div>
<div class="a" style="left:74px;top:294px;width:11px;height:1px;background:repeating-linear-gradient(90deg,#a0a0a0 0 1px,transparent 1px 2px)"></div>
<svg style="left:85px;top:285px" width="12" height="15" viewBox="0 0 12 15"><path d="M0.5 0.5H8L11.5 4V14.5H0.5Z" fill="url(#gd)"/><path d="M0.5 14.5V0.5H8" fill="none" stroke="#98b0d0"/><path d="M8 0.5L11.5 4V14.5H0.5" fill="none" stroke="#283858"/><path d="M8 0.5V4H11.5" fill="#fff" stroke="#283858" stroke-width="0.8"/></svg>
<div class="t" style="left:106px;top:289px;font-size:11.85px">osif.h</div>
<div class="a" style="left:74px;top:314px;width:11px;height:1px;background:repeating-linear-gradient(90deg,#a0a0a0 0 1px,transparent 1px 2px)"></div>
<svg style="left:85px;top:305px" width="12" height="15" viewBox="0 0 12 15"><path d="M0.5 0.5H8L11.5 4V14.5H0.5Z" fill="url(#gd)"/><path d="M0.5 14.5V0.5H8" fill="none" stroke="#98b0d0"/><path d="M8 0.5L11.5 4V14.5H0.5" fill="none" stroke="#283858"/><path d="M8 0.5V4H11.5" fill="#fff" stroke="#283858" stroke-width="0.8"/><path d="M2 2H6L8 7.5L6 13H2Z" fill="url(#chk)"/></svg>
<div class="t" style="left:106px;top:309px;font-size:11.85px">osif_baremetal.c</div>
<div class="a" style="left:62px;top:281px;width:174px;height:56px;border:4px solid #f84c4c;border-radius:3px"></div>
<div class="a" style="left:245px;top:103px;width:721px;height:22px;background:#f6f6f6"></div>
<div class="a" style="left:245px;top:125px;width:721px;height:1px;background:#a0a0a0"></div>
<div class="a" style="left:245px;top:126px;width:721px;height:2px;background:#c4d4f0"></div>
<div class="a" style="left:245px;top:126px;width:3px;height:600px;background:#c4d4f0"></div>
<div class="a" style="left:248px;top:128px;width:718px;height:1px;background:#606060"></div>
<div class="a" style="left:248px;top:128px;width:1px;height:600px;background:#606060"></div>
<svg style="left:246px;top:104px" width="145" height="23" viewBox="0 0 145 23"><path d="M1 22L23 0.5H140Q143 0.5 143 3.5V22Z" fill="#c4d4f0" stroke="#a0a0a0"/><path d="M1 22.5H143" stroke="#c4d4f0" stroke-width="2"/></svg>
<svg style="left:273px;top:107px" width="13" height="15" viewBox="0 0 13 15"><path d="M0.5 0.5H8.5L12 4V14.5H0.5Z" fill="url(#gd)"/><path d="M0.5 14.5V0.5H8.5" fill="none" stroke="#98b0d0"/><path d="M8.5 0.5L12 4V14.5H0.5" fill="none" stroke="#283858"/><path d="M8.5 0.5V4H12" fill="#fff" stroke="#283858" stroke-width="0.8"/><path d="M2 2H6L8 7.5L6 13H2Z" fill="url(#chk)"/></svg>
<div class="t" style="left:295px;top:109px;font-size:12px;font-weight:bold;transform:scaleX(0.885);transform-origin:0 0">osif_baremetal.c</div>
<div class="a" style="left:249px;top:129px;width:62px;height:600px;background:#e9e9e9"></div>
<div class="a" style="left:311px;top:129px;width:14px;height:600px;background-color:#fff;background-image:repeating-conic-gradient(#e8e8e8 0 25%,#fff 0 50%);background-size:2px 2px"></div>
<div class="a" style="left:326px;top:401px;width:640px;height:16px;background:#ddfde5"></div>
<div class="ln" style="top:129px">34</div>
<div class="ln" style="top:145px">35</div>
<div class="code" style="top:145px"><span class="c">/******************************************************************************************</span></div>
<div class="ln" style="top:161px">36</div>
<div class="code" style="top:161px"><span class="c"> * Private Functions</span></div>
<div class="ln" style="top:177px">37</div>
<div class="code" style="top:177px"><span class="c"> ******************************************************************************/</span></div>
<div class="ln" style="top:193px">38</div>
<div class="ln" style="top:209px">39</div>
<div class="code" style="top:209px"><span class="c">/*! </span><span class="d">@cond</span><span class="c"> DRIVER_INTERNAL_USE_ONLY */</span></div>
<div class="ln" style="top:225px">40</div>
<div class="ln" style="top:241px">41</div>
<div class="code" style="top:241px"><span class="c">/*! </span><span class="d">@brief</span><span class="c"> Converts milliseconds to ticks - in this case, one tick = one millisecond */</span></div>
<div class="ln" style="top:257px">42</div>
<div class="code" style="top:257px"><span class="p">#define</span> MSEC_TO_TICK(msec) (msec)</div>
<div class="ln" style="top:273px">43</div>
<div class="ln" style="top:289px">44</div>
<div class="code" style="top:289px"><span class="p">#if</span> (FEATURE_OSIF_USE_SYSTICK)</div>
<div class="ln" style="top:305px">45</div>
<div class="code" style="top:305px"><span class="c">/* Only include headers for configurations that need them. */</span></div>
<div class="ln" style="top:321px">46</div>
<div class="code" style="top:321px"><span class="p">#include</span> <span class="s">"interrupt_manager.h"</span></div>
<div class="ln" style="top:337px">47</div>
<div class="code" style="top:337px"><span class="p">#include</span> <span class="s">"clock_manager.h"</span></div>
<div class="ln" style="top:353px">48</div>
<div class="ln" style="top:369px">49</div>
<div class="code" style="top:369px"><span class="k">static volatile</span> uint32_t s_osif_tick_cnt = <span class="n">0u</span>;</div>
<div class="ln" style="top:385px">50</div>
<div class="ln" style="top:401px">51</div>
<div class="code" style="top:401px"><span class="k">static inline void</span> <span style="background:#99c9ef">osif_Tick</span>(<span class="k">void</span>)</div>
<div class="ln" style="top:417px">52</div>
<div class="code" style="top:417px">{</div>
<div class="ln" style="top:433px">53</div>
<div class="code" style="top:433px">    s_osif_tick_cnt++;</div>
<div class="ln" style="top:449px">54</div>
<div class="code" style="top:449px">}</div>
<div class="ln" style="top:465px">55</div>
<div class="ln" style="top:481px">56</div>
<div class="code" style="top:481px"><span class="k">static inline</span> uint32_t osif_GetCurrentTickCount(<span class="k">void</span>)</div>
<div class="ln" style="top:497px">57</div>
<div class="code" style="top:497px">{</div>
<div class="ln" style="top:513px">58</div>
<div class="code" style="top:513px">    <span class="k">return</span> s_osif_tick_cnt;</div>
<div class="ln" style="top:529px">59</div>
<div class="code" style="top:529px">}</div>
<div class="ln" style="top:545px">60</div>
<div class="ln" style="top:561px">61</div>
<div class="code" style="top:561px"><span class="p">#endif</span><span class="c"> /* (FEATURE_OSIF_USE_SYSTICK */</span></div>
<div class="ln" style="top:577px">62</div>
<div class="ln" style="top:593px">63</div>
<div class="code" style="top:593px"><span class="p">#if</span> FEATURE_OSIF_USE_SYSTICK</div>
<div class="ln" style="top:609px">64</div>
<div class="ln" style="top:625px">65</div>
<div class="code" style="top:625px"><span class="k">void</span> SysTick_Handler(<span class="k">void</span>);</div>
<div class="ln" style="top:641px">66</div>
<div class="ln" style="top:657px">67</div>
<div class="code" style="top:657px"><span class="k">void</span> SysTick_Handler(<span class="k">void</span>)</div>
<div class="ln" style="top:673px">68</div>
<div class="code" style="top:673px">{</div>
<div class="ln" style="top:689px">69</div>
<div class="code" style="top:689px">    <span style="background:#e5f1fb">osif_Tick</span>();</div>
<div class="ln" style="top:705px">70</div>
<div class="code" style="top:705px">}</div>
<div class="a" style="left:318px;top:129px;width:1px;height:9px;background:#808080"></div>
<div class="a" style="left:318px;top:137px;width:6px;height:1px;background:#808080"></div>
<div class="a" style="left:318px;top:159px;width:1px;height:2px;background:#808080"></div>
<div class="a" style="left:313px;top:148px;width:11px;height:11px;border:1px solid #808080;background:#f0f0f0"></div>
<div class="a" style="left:315px;top:153px;width:7px;height:1px;background:#808080"></div>
<div class="a" style="left:318px;top:161px;width:1px;height:16px;background:#808080"></div>
<div class="a" style="left:318px;top:177px;width:1px;height:16px;background:#808080"></div>
<div class="a" style="left:318px;top:193px;width:1px;height:9px;background:#808080"></div>
<div class="a" style="left:318px;top:201px;width:6px;height:1px;background:#808080"></div>
<div class="a" style="left:318px;top:303px;width:1px;height:2px;background:#808080"></div>
<div class="a" style="left:313px;top:292px;width:11px;height:11px;border:1px solid #808080;background:#f0f0f0"></div>
<div class="a" style="left:315px;top:297px;width:7px;height:1px;background:#808080"></div>
<div class="a" style="left:318px;top:305px;width:1px;height:16px;background:#808080"></div>
<div class="a" style="left:318px;top:321px;width:1px;height:16px;background:#808080"></div>
<div class="a" style="left:318px;top:337px;width:1px;height:16px;background:#808080"></div>
<div class="a" style="left:318px;top:353px;width:1px;height:16px;background:#808080"></div>
<div class="a" style="left:318px;top:369px;width:1px;height:16px;background:#808080"></div>
<div class="a" style="left:318px;top:385px;width:1px;height:16px;background:#808080"></div>
<div class="a" style="left:318px;top:401px;width:1px;height:16px;background:#808080"></div>
<div class="a" style="left:318px;top:417px;width:1px;height:3px;background:#808080"></div>
<div class="a" style="left:318px;top:431px;width:1px;height:2px;background:#808080"></div>
<div class="a" style="left:313px;top:420px;width:11px;height:11px;border:1px solid #808080;background:#f0f0f0"></div>
<div class="a" style="left:315px;top:425px;width:7px;height:1px;background:#808080"></div>
<div class="a" style="left:318px;top:433px;width:1px;height:16px;background:#808080"></div>
<div class="a" style="left:318px;top:449px;width:1px;height:16px;background:#808080"></div>
<div class="a" style="left:318px;top:465px;width:1px;height:16px;background:#808080"></div>
<div class="a" style="left:318px;top:473px;width:6px;height:1px;background:#808080"></div>
<div class="a" style="left:318px;top:481px;width:1px;height:16px;background:#808080"></div>
<div class="a" style="left:318px;top:497px;width:1px;height:3px;background:#808080"></div>
<div class="a" style="left:318px;top:511px;width:1px;height:2px;background:#808080"></div>
<div class="a" style="left:313px;top:500px;width:11px;height:11px;border:1px solid #808080;background:#f0f0f0"></div>
<div class="a" style="left:315px;top:505px;width:7px;height:1px;background:#808080"></div>
<div class="a" style="left:318px;top:513px;width:1px;height:16px;background:#808080"></div>
<div class="a" style="left:318px;top:529px;width:1px;height:16px;background:#808080"></div>
<div class="a" style="left:318px;top:545px;width:1px;height:16px;background:#808080"></div>
<div class="a" style="left:318px;top:553px;width:6px;height:1px;background:#808080"></div>
<div class="a" style="left:318px;top:561px;width:1px;height:16px;background:#808080"></div>
<div class="a" style="left:318px;top:577px;width:1px;height:9px;background:#808080"></div>
<div class="a" style="left:318px;top:585px;width:6px;height:1px;background:#808080"></div>
<div class="a" style="left:318px;top:607px;width:1px;height:2px;background:#808080"></div>
<div class="a" style="left:313px;top:596px;width:11px;height:11px;border:1px solid #808080;background:#f0f0f0"></div>
<div class="a" style="left:315px;top:601px;width:7px;height:1px;background:#808080"></div>
<div class="a" style="left:318px;top:609px;width:1px;height:16px;background:#808080"></div>
<div class="a" style="left:318px;top:625px;width:1px;height:16px;background:#808080"></div>
<div class="a" style="left:318px;top:641px;width:1px;height:16px;background:#808080"></div>
<div class="a" style="left:318px;top:657px;width:1px;height:16px;background:#808080"></div>
<div class="a" style="left:318px;top:673px;width:1px;height:3px;background:#808080"></div>
<div class="a" style="left:318px;top:687px;width:1px;height:2px;background:#808080"></div>
<div class="a" style="left:313px;top:676px;width:11px;height:11px;border:1px solid #808080;background:#f0f0f0"></div>
<div class="a" style="left:315px;top:681px;width:7px;height:1px;background:#808080"></div>
<div class="a" style="left:318px;top:689px;width:1px;height:16px;background:#808080"></div>
<div class="a" style="left:318px;top:705px;width:1px;height:16px;background:#808080"></div>
<svg style="left:250px;top:401px" width="10" height="16" viewBox="0 0 10 16"><path d="M0.5 0.5L9 8L0.5 15.5Z" fill="#40e8f8" stroke="#202020" stroke-width="1"/></svg>
</body></html>
